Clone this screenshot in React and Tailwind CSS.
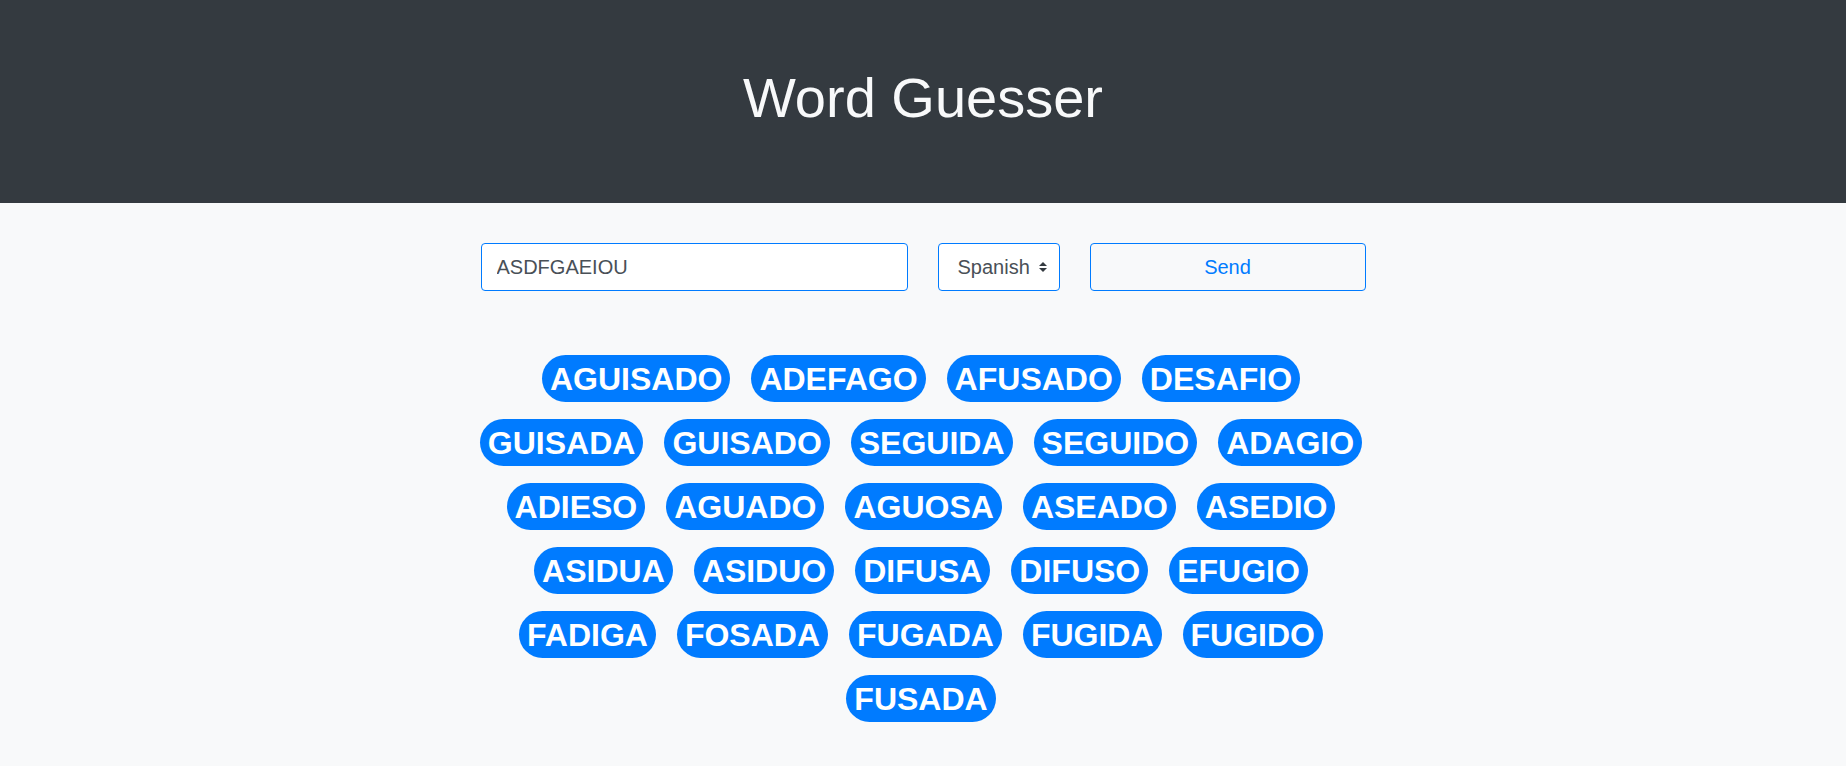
import { useState } from 'react';

const words = [
  'AGUISADO', 'ADEFAGO', 'AFUSADO', 'DESAFIO',
  'GUISADA', 'GUISADO', 'SEGUIDA', 'SEGUIDO', 'ADAGIO',
  'ADIESO', 'AGUADO', 'AGUOSA', 'ASEADO', 'ASEDIO',
  'ASIDUA', 'ASIDUO', 'DIFUSA', 'DIFUSO', 'EFUGIO',
  'FADIGA', 'FOSADA', 'FUGADA', 'FUGIDA', 'FUGIDO',
  'FUSADA',
];

export default function App() {
  const [letters, setLetters] = useState('ASDFGAEIOU');
  const [lang, setLang] = useState('es');

  return (
    <div className="min-h-screen bg-[#f8f9fa] font-['Liberation_Sans',Arial,sans-serif]">
      {/* Jumbotron */}
      <header className="bg-[#343a40] pt-16 pb-[72px]">
        <h1 className="text-center text-[56px] leading-[1.2] font-light text-[#f8f9fa]">
          Word Guesser
        </h1>
      </header>

      {/* Form */}
      <form
        className="pt-10 flex justify-center gap-[30px]"
        onSubmit={(e) => e.preventDefault()}
      >
        <input
          value={letters}
          onChange={(e) => setLetters(e.target.value.toUpperCase())}
          className="w-[427px] h-12 px-[15px] bg-white border border-[#007bff] rounded-[4px] text-[20px] text-[#495057] outline-none"
        />
        <div className="relative w-[122px] h-12">
          <select
            value={lang}
            onChange={(e) => setLang(e.target.value)}
            className="appearance-none w-full h-full pl-[19px] pr-7 bg-white border border-[#007bff] rounded-[4px] text-[20px] text-[#495057] outline-none"
          >
            <option value="es">Spanish</option>
            <option value="en">English</option>
          </select>
          <svg
            viewBox="0 0 4 5"
            className="absolute right-[13px] top-1/2 -translate-y-1/2 w-2 h-[10px] pointer-events-none"
          >
            <path fill="#343a40" d="M2 0L0 2h4zm0 5L0 3h4z" />
          </svg>
        </div>
        <button
          type="submit"
          className="w-[276px] h-12 border border-[#007bff] rounded-[4px] text-[20px] text-[#007bff] bg-transparent"
        >
          Send
        </button>
      </form>

      {/* Results */}
      <div className="mt-16 mx-auto w-[904px] pr-1 flex flex-wrap justify-center gap-x-[21px] gap-y-[17px]">
        {words.map((w) => (
          <span
            key={w}
            className="h-[47px] px-2 flex items-center rounded-full bg-[#007bff] text-white text-[32px] font-bold leading-none"
          >
            {w}
          </span>
        ))}
      </div>
    </div>
  );
}
